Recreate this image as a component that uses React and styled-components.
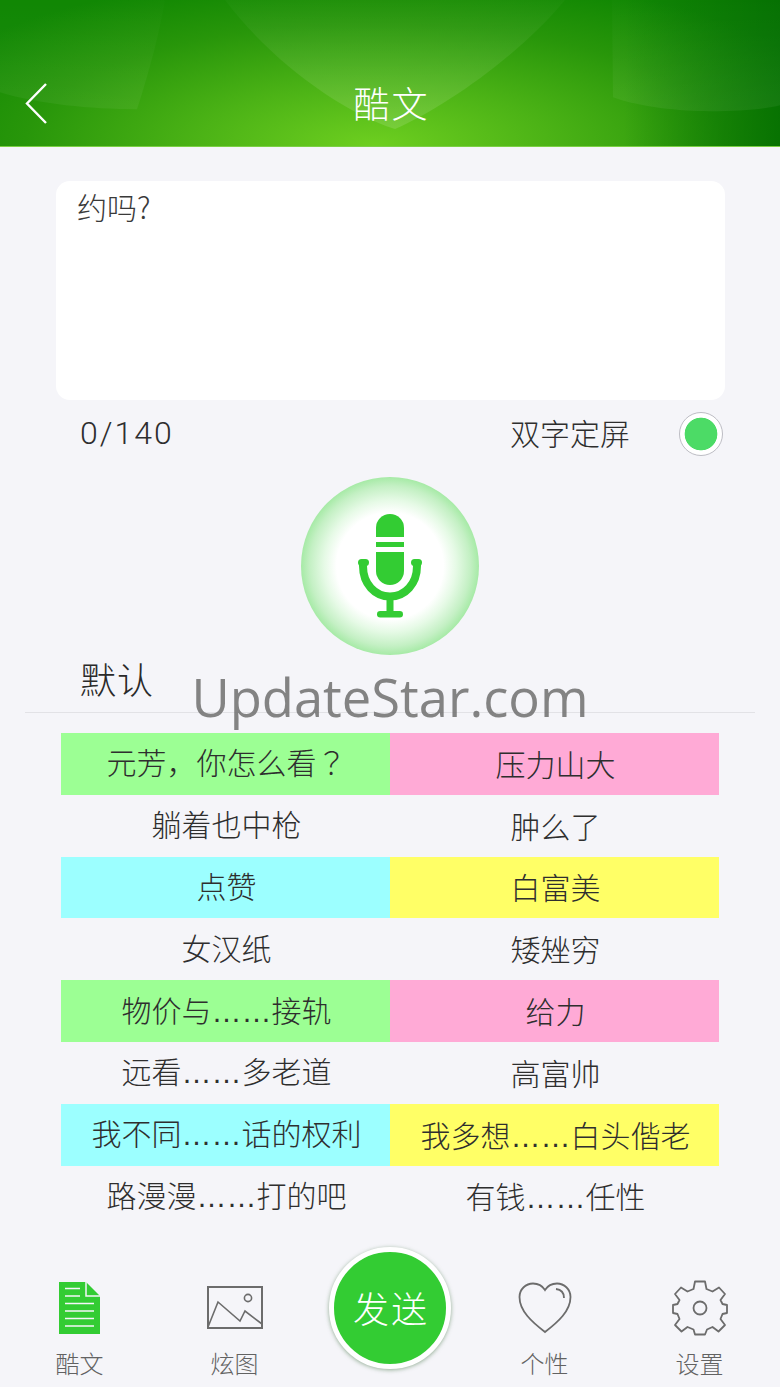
import React from 'react'
import styled, { createGlobalStyle } from 'styled-components'

const CJK = '"Noto Sans CJK SC", "Liberation Sans", sans-serif'

function App() {
  return (
    <Page>
      <GlobalStyle />
      <Header>
        <HeaderArt viewBox="0 0 780 147" preserveAspectRatio="none">
          <defs>
            <linearGradient id="leaf" x1="0" y1="0" x2="0" y2="1">
              <stop offset="0" stopColor="#fff" stopOpacity="0.02" />
              <stop offset="1" stopColor="#fff" stopOpacity="0.13" />
            </linearGradient>
          </defs>
          <path d="M225 0 C270 60 340 112 395 130 C445 108 520 55 565 0 Z" fill="url(#leaf)" />
          <path d="M0 93 C40 105 90 110 137 110 C150 70 160 30 165 0 L0 0 Z" fill="url(#leaf)" opacity="0.4" />
          <path d="M612 0 L613 98 C640 108 680 112 710 112 C740 112 765 110 780 106 L780 0 Z" fill="url(#leaf)" opacity="0.45" />
        </HeaderArt>
        <BackIcon viewBox="0 0 24 42">
          <path d="M22 1 L3 20.5 L22 40" fill="none" stroke="#fff" strokeWidth="2.4" />
        </BackIcon>
        <Title>酷文</Title>
      </Header>

      <Main>
        <TextBox>约吗?</TextBox>
        <OptionRow>
          <Counter>0/140</Counter>
          <OptionRight>
            <OptionLabel>双字定屏</OptionLabel>
            <Radio />
          </OptionRight>
        </OptionRow>

        <MicButton>
          <svg width="64" height="104" viewBox="0 0 64 104">
            <path d="M18 23 V14 a14 14 0 0 1 28 0 V23 Z" fill="#33cc33" />
            <rect x="18" y="28" width="28" height="5" fill="#33cc33" />
            <path d="M18 38 H46 V57 a14 14 0 0 1 -28 0 Z" fill="#33cc33" />
            <path d="M5 47 V52 C5 70 17 82.5 32 82.5 C47 82.5 59 70 59 52 V47" fill="none" stroke="#33cc33" strokeWidth="8" />
            <rect x="0" y="45" width="11" height="7" rx="3.5" fill="#33cc33" />
            <rect x="53" y="45" width="11" height="7" rx="3.5" fill="#33cc33" />
            <rect x="28.5" y="83" width="7" height="15" fill="#33cc33" />
            <rect x="19" y="97" width="26" height="6.5" rx="3.2" fill="#33cc33" />
          </svg>
        </MicButton>

        <SectionTitle>默认</SectionTitle>
        <Divider />
        <Watermark>UpdateStar.com</Watermark>

        <Grid>
          {phrases.map((row, i) => (
            <React.Fragment key={i}>
              <Cell $bg={row[2]}>{row[0]}</Cell>
              <Cell $bg={row[3]} $right>{row[1]}</Cell>
            </React.Fragment>
          ))}
        </Grid>
      </Main>

      <TabBar>
        <Tab>
          <TabIcon>
            <svg width="42" height="52" viewBox="0 0 42 52">
              <path d="M0 0 H27 L41 14 V52 H0 Z" fill="#33cc33" />
              <path d="M27 0 V14 H41" fill="none" stroke="#f5f5f9" strokeWidth="1.5" />
              <path d="M6 6.5 H21 M6 14 H21 M6 21.5 H35 M6 29 H35 M6 36.5 H35 M6 44 H35" stroke="#f5f5f9" strokeWidth="1.6" />
            </svg>
          </TabIcon>
          酷文
        </Tab>
        <Tab>
          <TabIcon>
            <svg width="56" height="44" viewBox="0 0 56 44">
              <rect x="1" y="1" width="54" height="41" fill="none" stroke="#6c6c6c" strokeWidth="2" />
              <circle cx="41" cy="12" r="3.6" fill="none" stroke="#6c6c6c" strokeWidth="1.6" />
              <path d="M1 41 L11 16 L33 35 L38 25 L55 38" fill="none" stroke="#6c6c6c" strokeWidth="1.6" />
            </svg>
          </TabIcon>
          炫图
        </Tab>
        <SendSlot>
          <SendButton>发送</SendButton>
        </SendSlot>
        <Tab>
          <TabIcon>
            <svg width="54" height="52" viewBox="0 0 54 52">
              <path d="M27 50 C14 40 1.5 29 1.5 15 C1.5 7 8 1.5 15 1.5 C20 1.5 24.5 4 27 8 C29.5 4 34 1.5 39 1.5 C46 1.5 52.5 7 52.5 15 C52.5 29 40 40 27 50 Z" fill="none" stroke="#6c6c6c" strokeWidth="1.8" />
              <path d="M38 7 C43 7.5 46 11 46 16" fill="none" stroke="#6c6c6c" strokeWidth="1.8" />
            </svg>
          </TabIcon>
          个性
        </Tab>
        <Tab>
          <TabIcon>
            <svg width="56" height="56" viewBox="0 0 56 56">
              <path d="M23 1.5 H33 L34.5 9 L40.5 11.5 L47 7.5 L53 14 L48.5 20 L50.5 24 L55 25 V33 L50.5 34 L48.5 39 L53 45 L46.5 51.5 L40.5 47 L35 49.5 L33 54.5 H23 L21.5 49.5 L15.5 47 L9.5 51.5 L3 45 L7.5 39 L5.5 34 L1 33 V25 L5.5 24 L7.5 20 L3 14 L9 7.5 L15.5 11.5 L21.5 9 Z" fill="none" stroke="#6c6c6c" strokeWidth="1.8" strokeLinejoin="round" />
              <circle cx="28" cy="28" r="6.5" fill="none" stroke="#6c6c6c" strokeWidth="1.8" />
            </svg>
          </TabIcon>
          设置
        </Tab>
      </TabBar>
    </Page>
  )
}

export default App

const GlobalStyle = createGlobalStyle`
  html, body {
    margin: 0;
    padding: 0;
    background: #f5f5f9;
  }
  * {
    box-sizing: border-box;
  }
`

const Page = styled.div`
  width: 780px;
  height: 1387px;
  display: flex;
  flex-direction: column;
  overflow: hidden;
  background: #f5f5f9;
  font-family: ${CJK};
  font-weight: 300;
  color: #333;
`

const Header = styled.div`
  position: relative;
  flex: none;
  height: 147px;
  display: flex;
  align-items: center;
  justify-content: center;
  padding-top: 57px;
  background:
    linear-gradient(90deg, rgba(0, 110, 0, 0) 80%, rgba(0, 105, 0, 0.75) 100%),
    radial-gradient(ellipse 500px 175px at 48% 100%, #6ecf20 0%, #4cb316 35%, #28960a 70%, #0f8602 100%);
  border-bottom: 1px solid #7bd044;
`

const HeaderArt = styled.svg`
  position: absolute;
  inset: 0;
  width: 100%;
  height: 100%;
`

const BackIcon = styled.svg`
  position: absolute;
  left: 24px;
  top: 83px;
  width: 24px;
  height: 42px;
`

const Title = styled.div`
  position: relative;
  padding-left: 3px;
  font-size: 36px;
  line-height: 44px;
  letter-spacing: 2px;
  color: #fff;
`

const Main = styled.div`
  position: relative;
  flex: 1;
  padding: 34px 25px 0;
`

const TextBox = styled.div`
  width: 669px;
  height: 219px;
  margin-left: 31px;
  padding: 5px 21px;
  background: #fff;
  border-radius: 14px;
  font-size: 30px;
  line-height: 40px;
  color: #3a3a3a;
`

const OptionRow = styled.div`
  display: flex;
  align-items: center;
  justify-content: space-between;
  height: 66px;
  padding: 0 32px 0 55px;
`

const Counter = styled.div`
  font-family: Roboto, sans-serif;
  font-weight: 300;
  font-size: 32px;
  letter-spacing: 2px;
  color: #2e2e2e;
`

const OptionRight = styled.div`
  display: flex;
  align-items: center;
  gap: 49px;
`

const OptionLabel = styled.div`
  font-size: 30px;
  color: #2e2e2e;
  transform: translateY(-1px);
`

const Radio = styled.div`
  width: 44px;
  height: 44px;
  margin-top: 2px;
  border-radius: 50%;
  border: 1px solid #bdbdc4;
  background: radial-gradient(circle closest-side, #4cdb66 0 16px, #fff 16.7px);
`

const MicButton = styled.div`
  width: 178px;
  height: 178px;
  margin: 11px auto 0;
  display: flex;
  align-items: center;
  justify-content: center;
  border-radius: 50%;
  background: radial-gradient(circle closest-side, #fff 0 60%, #e6fae6 74%, #c4f0c4 90%, #a6eaa6 100%);
`

const SectionTitle = styled.div`
  height: 57px;
  padding: 1px 0 0 55px;
  font-size: 36px;
  line-height: 44px;
  letter-spacing: 1px;
  color: #2a2a2a;
`

const Divider = styled.div`
  height: 1px;
  background: #e2e2e6;
`

const Watermark = styled.div`
  position: absolute;
  left: 0;
  right: 0;
  top: 515px;
  text-align: center;
  font-family: "Open Sans", sans-serif;
  font-weight: 400;
  font-size: 52.5px;
  line-height: 70px;
  color: rgba(110, 110, 110, 0.85);
`

const Grid = styled.div`
  display: grid;
  grid-template-columns: 329px 329px;
  grid-auto-rows: 61.8px;
  margin: 20px 0 0 36px;
`

const Cell = styled.div`
  display: flex;
  align-items: center;
  justify-content: center;
  padding-left: 2px;
  padding-bottom: ${props => (props.$right ? '2px' : '5px')};
  background: ${props => props.$bg || 'transparent'};
  font-family: "Liberation Sans", ${CJK};
  font-size: 30px;
  color: #2e2e2e;
`

const WideMark = styled.span`
  font-family: "Noto Sans CJK TC", sans-serif;
`

const TabBar = styled.div`
  flex: none;
  display: grid;
  grid-template-columns: repeat(5, 155px);
  height: 140px;
  padding-left: 2px;
`

const Tab = styled.div`
  display: flex;
  flex-direction: column;
  align-items: center;
  font-size: 24px;
  line-height: 30px;
  color: #626262;
`

const TabIcon = styled.div`
  height: 101px;
  padding-top: 20px;
  display: flex;
  align-items: center;
  justify-content: center;
`

const SendSlot = styled.div`
  display: flex;
  justify-content: center;
`

const SendButton = styled.div`
  width: 122px;
  height: 122px;
  padding-left: 3px;
  padding-bottom: 3px;
  display: flex;
  align-items: center;
  justify-content: center;
  border-radius: 50%;
  border: 5px solid #fff;
  background: #33cc33;
  box-shadow: 0 1px 4px rgba(60, 110, 60, 0.55);
  color: #fff;
  font-size: 36px;
  letter-spacing: 2px;
`

const phrases = [
  [<>元芳，你怎么看<WideMark>？</WideMark></>, '压力山大', '#9cff94', '#ffaad6'],
  ['躺着也中枪', '肿么了'],
  ['点赞', '白富美', '#9cffff', '#ffff66'],
  ['女汉纸', '矮矬穷'],
  ['物价与……接轨', '给力', '#9cff94', '#ffaad6'],
  ['远看……多老道', '高富帅'],
  ['我不同……话的权利', '我多想……白头偕老', '#9cffff', '#ffff66'],
  ['路漫漫……打的吧', '有钱……任性'],
]
